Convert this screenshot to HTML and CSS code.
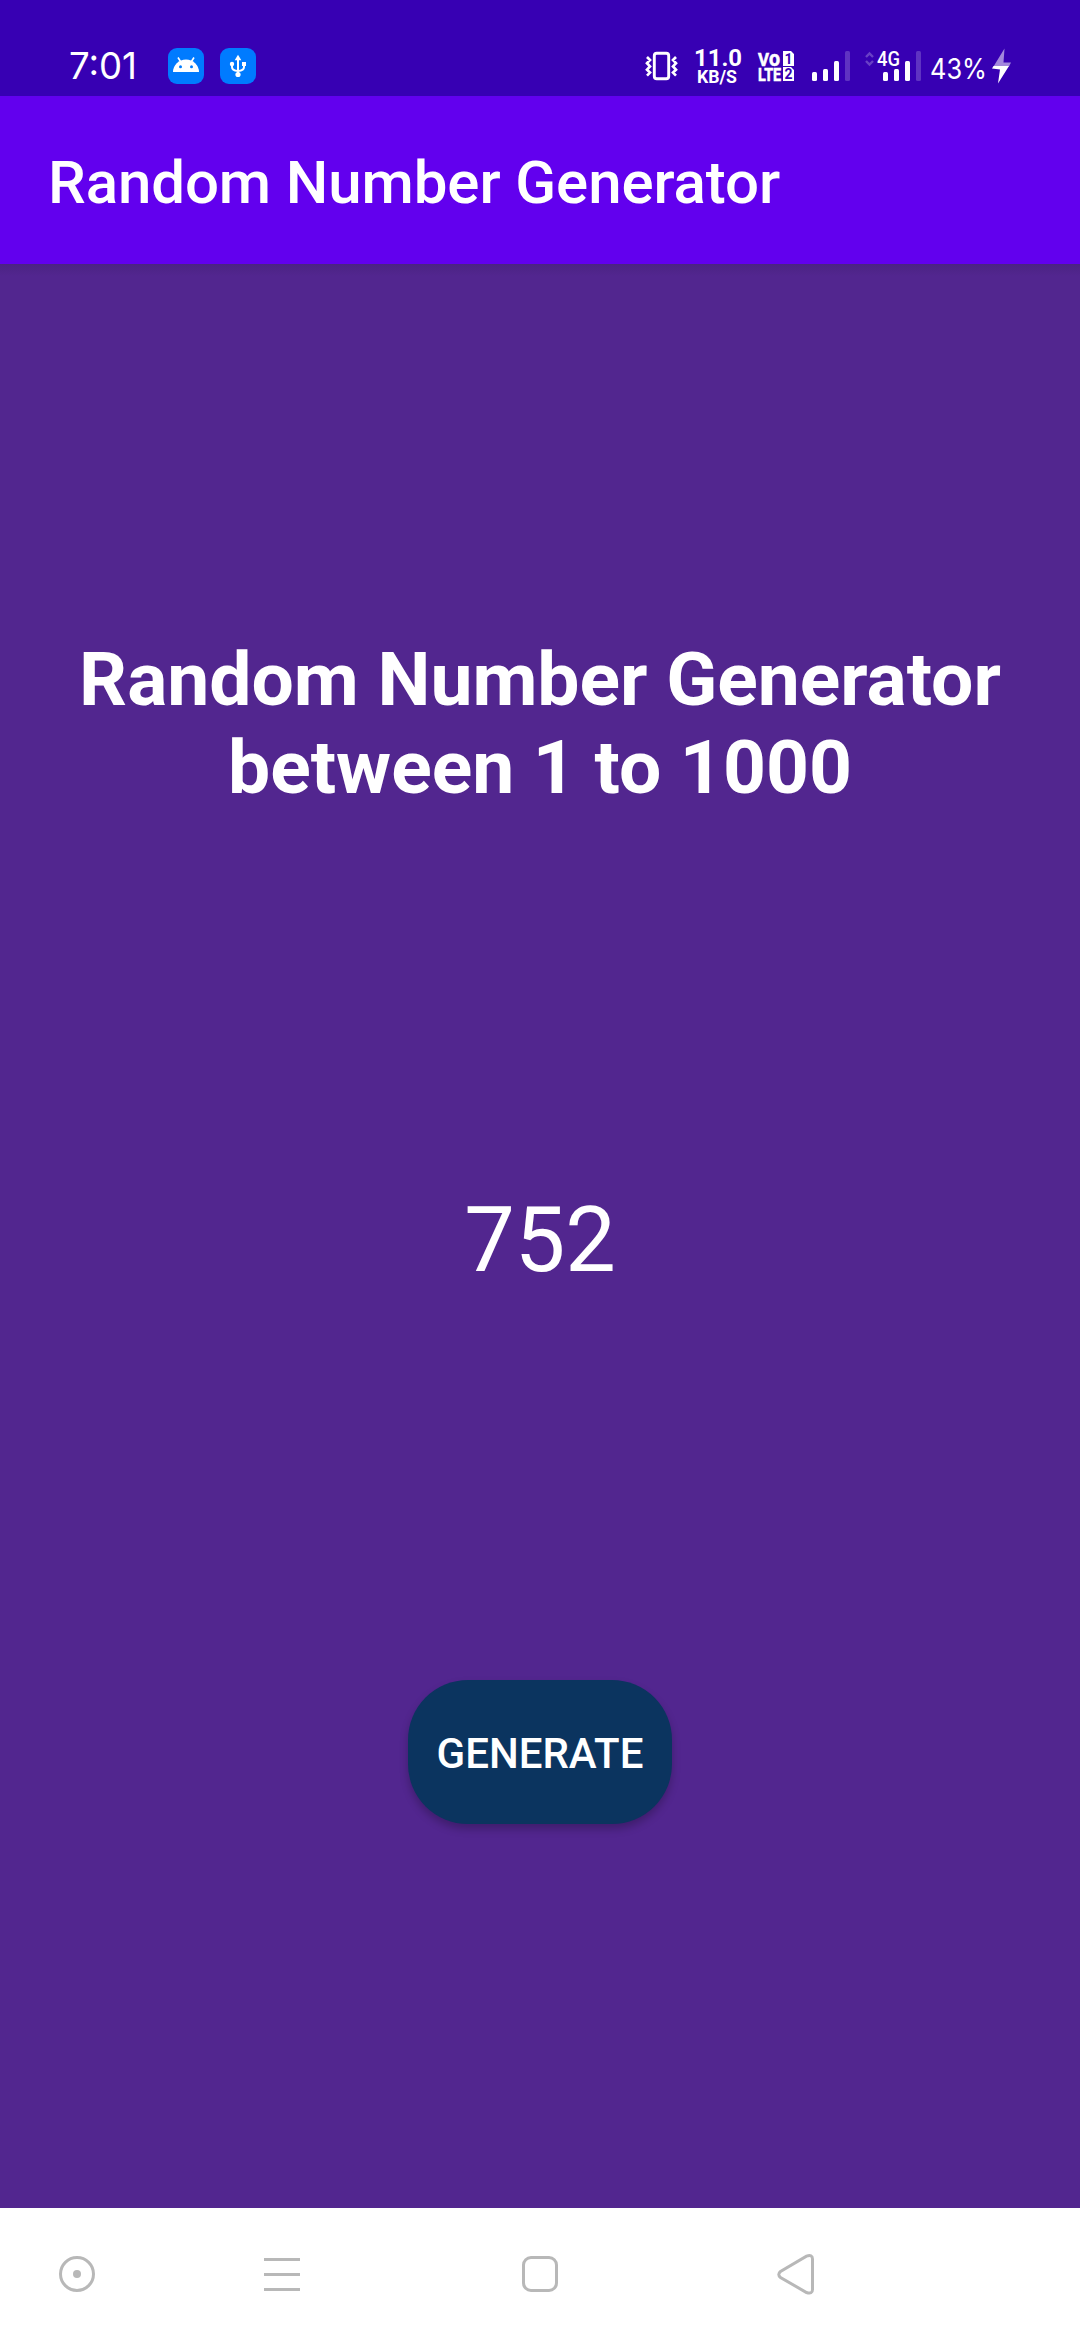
FILE: index.html
```html
<!DOCTYPE html>
<html lang="en">
<head>
<meta charset="utf-8">
<title>Random Number Generator</title>
<link rel="stylesheet" href="styles.css">
</head>
<body>
<div class="screen">
  <header class="status-bar">
    <div class="status-group">
      <svg class="icon" width="74" height="36" viewBox="0 0 74 36"><text class="clock" x="0" y="31" textLength="68" lengthAdjust="spacingAndGlyphs">7:01</text></svg>
      <div class="notifications">
        <svg class="icon" width="36" height="36" viewBox="0 0 36 36">
          <rect width="36" height="36" rx="9" fill="#007bff"/>
          <path d="M5 24a13 12.5 0 0 1 26 0z" fill="#fff"/>
          <path d="M10 9.5l3.2 5M26 9.5l-3.2 5" stroke="#fff" stroke-width="1.6"/>
          <circle cx="12.5" cy="18.7" r="1.5" fill="#007bff"/><circle cx="23.5" cy="18.7" r="1.5" fill="#007bff"/>
        </svg>
        <svg class="icon" width="36" height="36" viewBox="0 0 36 36">
          <rect width="36" height="36" rx="9" fill="#007bff"/>
          <path d="M18 11v15M12 17v2q0 3.5 6 4q6-.5 6-4v-3" fill="none" stroke="#fff" stroke-width="2"/>
          <path d="M18 6.8l3.3 5.4h-6.6z" fill="#fff"/>
          <circle cx="12" cy="16" r="2.2" fill="#fff"/><rect x="22" y="14" width="4" height="4" fill="#fff"/><circle cx="18" cy="26.5" r="2.6" fill="#fff"/>
        </svg>
      </div>
    </div>
    <div class="status-group">
      <svg class="icon" width="32" height="36" viewBox="646 48 32 36" fill="none" stroke="#fff">
        <rect x="654.3" y="53.3" width="14.4" height="25.4" rx="2.5" stroke-width="2.9"/>
        <path d="M647 57l3 3-3 3.2 3 3.2-3 3.2 3 3-3 3M676 57l-3 3 3 3.2-3 3.2 3 3.2-3 3 3 3" stroke-width="2.7"/>
      </svg>
      <svg class="icon speed" width="50" height="36" viewBox="693 48 50 36">
        <text class="rate" x="694" y="66" textLength="48" lengthAdjust="spacingAndGlyphs">11.0</text>
        <text class="unit" x="697" y="82.7" textLength="40" lengthAdjust="spacingAndGlyphs">KB/S</text>
      </svg>
      <svg class="icon volte" width="38" height="36" viewBox="757 48 38 36">
        <text class="lte" x="758" y="65.7" textLength="11" lengthAdjust="spacingAndGlyphs">V</text>
        <text class="lte small-o" x="769" y="65.7" textLength="11" lengthAdjust="spacingAndGlyphs">o</text>
        <text class="lte" x="758" y="80.7" textLength="23" lengthAdjust="spacingAndGlyphs">LTE</text>
        <path d="M783 51h8l3 3v12h-11zM783 67h8l3 3v11h-11z" fill="#fff"/>
        <text class="sim" x="784.5" y="63.5">1</text>
        <text class="sim" x="784.5" y="79">2</text>
      </svg>
      <svg class="icon signal" width="40" height="36" viewBox="811 48 40 36" fill="#fff">
        <rect x="812" y="72" width="5" height="9" rx="1.5"/><rect x="823" y="69" width="5" height="12" rx="1.5"/><rect x="834" y="61" width="5" height="20" rx="1.5"/>
        <rect x="845" y="51" width="5" height="30" rx="1.5" opacity=".2"/>
      </svg>
      <svg class="icon mobile" width="58" height="36" viewBox="864 48 58 36" fill="#fff">
        <path d="M866 57l3.5-3.5 3.5 3.5M866 61l3.5 3.5 3.5-3.5" fill="none" stroke="#fff" stroke-width="2.4" opacity=".25"/>
        <text class="net" x="877" y="66" textLength="23" lengthAdjust="spacingAndGlyphs">4G</text>
        <rect x="883" y="72" width="5" height="9" rx="1.5"/><rect x="894" y="69" width="5" height="12" rx="1.5"/><rect x="905" y="61" width="5" height="20" rx="1.5"/>
        <rect x="916" y="51" width="5" height="30" rx="1.5" opacity=".2"/>
      </svg>
      <svg class="icon battery" width="82" height="36" viewBox="930 48 82 36">
        <text class="percent" x="930" y="79" textLength="57" lengthAdjust="spacingAndGlyphs">43%</text>
        <path d="M1004.500 48.500L993.500 66.500H1009L1011 62.500H1003.500z" fill="#a387dc"/>
        <path d="M992 68.500l1.500-2.500H1009L998 83.500 1000 69.500z" fill="#fff"/>
      </svg>
    </div>
  </header>
  <div class="app-bar">Random Number Generator</div>
  <main class="content">
    <h1 class="heading">Random Number Generator<br>between 1 to 1000</h1>
    <div class="result">752</div>
    <button class="generate" type="button">GENERATE</button>
  </main>
  <nav class="nav-bar">
    <svg class="icon" width="42" height="42" viewBox="0 0 42 42"><circle cx="21" cy="21" r="16.5"/><circle class="dot" cx="21" cy="21" r="4"/></svg>
    <svg class="icon menu" width="42" height="42" viewBox="0 0 42 42"><path d="M3 6.500H39M3 21.500H39M3 36.500H39"/></svg>
    <svg class="icon home" width="42" height="42" viewBox="0 0 42 42"><rect x="4.500" y="4.500" width="33" height="33" rx="7.500"/></svg>
    <svg class="icon back" width="42" height="42" viewBox="0 0 42 42"><path d="M31.500 3.200Q37.500 1.200 37.500 6V36.500Q37.500 41.500 31.500 39.500L5.500 24.500Q2 21.500 5.500 18.500Z"/></svg>
  </nav>
</div>
</body>
</html>
```
FILE: styles.css
```css
* { box-sizing: border-box; }
body { margin: 0; font-family: Roboto, sans-serif; color: #fff; }
.screen { display: flex; flex-direction: column; width: 1080px; height: 2340px; background: #52268f; }
.icon { display: block; flex: none; overflow: visible; }
.status-bar { display: flex; justify-content: space-between; height: 96px; padding: 48px 68px 0 69px; background: #3700b3; }
.status-group { display: flex; }
.notifications { display: flex; gap: 16px; margin-left: 25px; }
.status-bar text { fill: #fff; }
.clock { font: 400 37px Inter, sans-serif; }
.speed { margin-left: 15px; }
.rate { font: 700 24px Roboto, sans-serif; }
.unit { font: 700 18.5px Roboto, sans-serif; }
.volte { margin-left: 14px; }
.lte { font: 700 19px Roboto, sans-serif; stroke: #fff; stroke-width: 0.6px; }
.small-o { font-size: 22px; }
.status-bar .sim { font: 700 14px Roboto, sans-serif; fill: #3700b3; }
.signal { margin-left: 16px; }
.mobile { margin-left: 13px; }
.net { font: 500 20px Roboto, sans-serif; }
.battery { margin-left: 8px; }
.percent { font: 400 29px Inter, sans-serif; }
.app-bar { display: flex; align-items: center; height: 168px; padding: 4px 48px 0; background: #6200ee; font-size: 60px; font-weight: 500; letter-spacing: -0.1px; }
.content { display: flex; flex: 1; flex-direction: column; align-items: center; padding-top: 371px; background: linear-gradient(#4b2383, #52268f 12px); }
.heading { margin: 0; font-size: 75px; font-weight: 700; line-height: 88px; text-align: center; }
.result { margin-top: 377px; font-size: 90px; line-height: 105px; }
.generate { width: 264px; height: 144px; margin-top: 387px; padding: 2px 0 0; border: 0; border-radius: 60px; background: #0b345f; box-shadow: 0 5px 9px rgb(0 0 0 / 24%); color: #fff; font: 500 42px Roboto, sans-serif; }
.nav-bar { display: flex; height: 132px; padding: 45px 0 0 56px; background: #fff; fill: none; stroke: #b8b8b8; stroke-width: 3; }
.dot { fill: #b8b8b8; stroke: none; }
.menu { margin-left: 163px; }
.home { margin-left: 216px; }
.back { margin-left: 214px; }
```
